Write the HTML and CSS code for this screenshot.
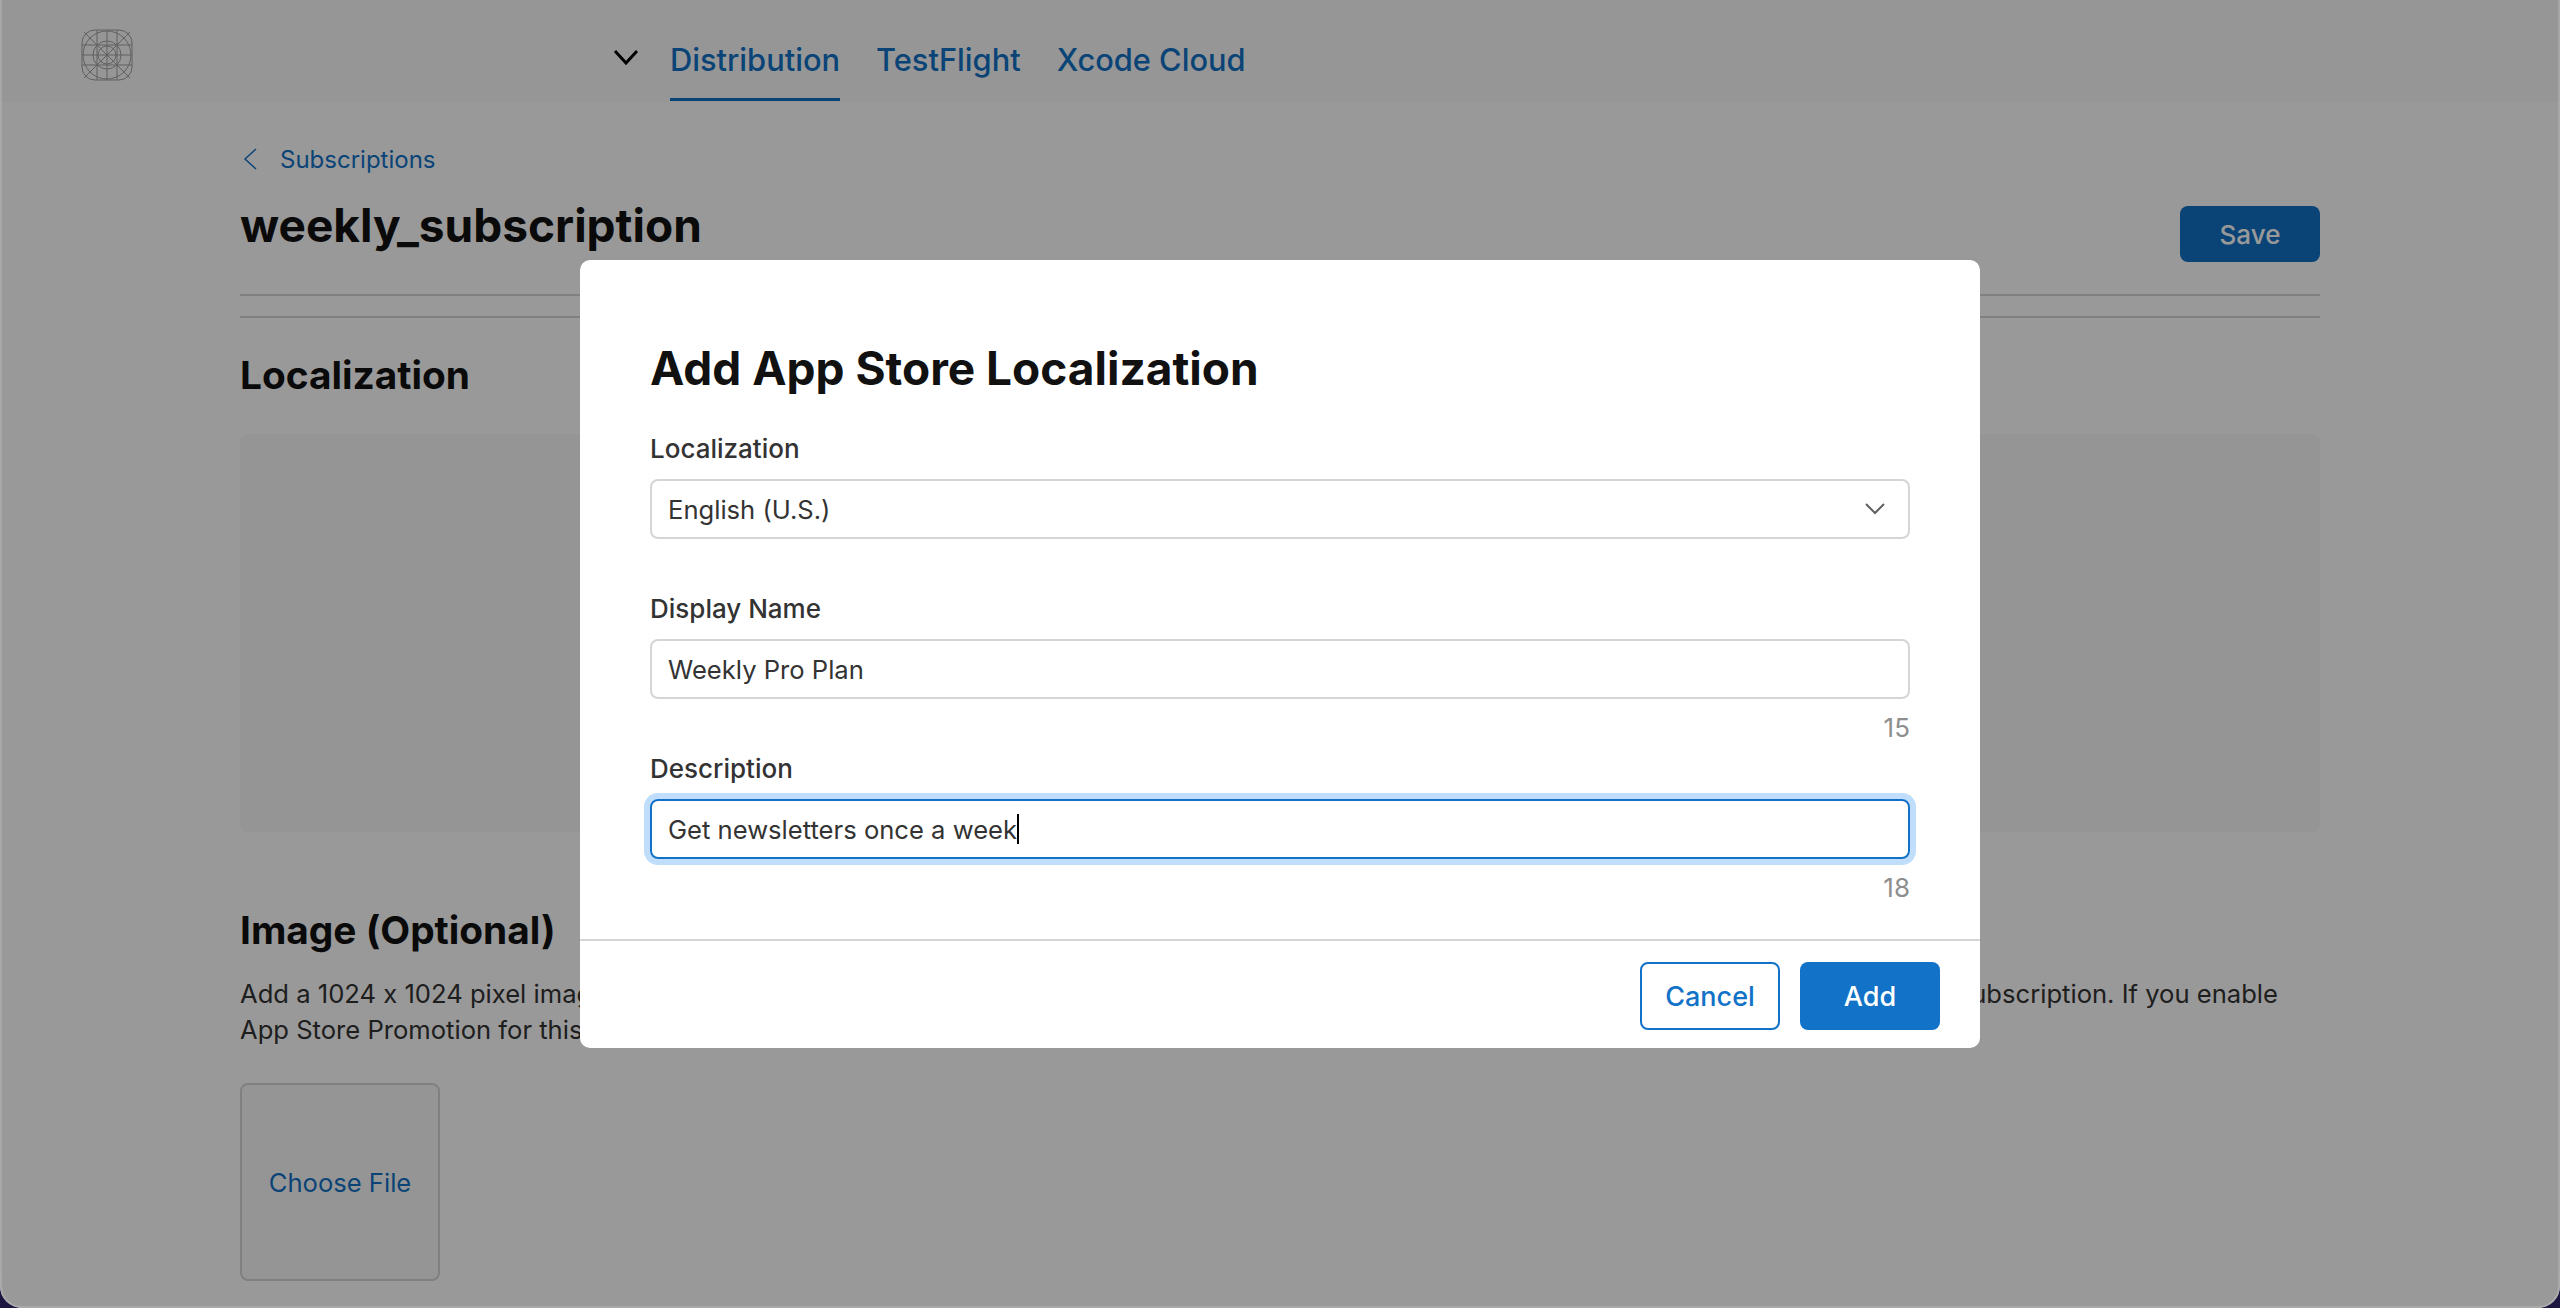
FILE: index.html
```html
<!DOCTYPE html>
<html lang="en">
<head>
    <meta charset="UTF-8">
    <meta name="viewport" content="width=device-width, initial-scale=1.0">
    <title>weekly_subscription</title>
    <link rel="stylesheet" href="styles.css">
</head>
<body>
    <div class="window">
        <header class="topbar">
            <svg class="logo" viewBox="0 0 52 52" fill="none" stroke="#a0a0a0" stroke-width="1">
                <rect x="1" y="1" width="50" height="50" rx="13"/>
                <circle cx="26" cy="26" r="24"/>
                <circle cx="26" cy="26" r="14"/>
                <circle cx="26" cy="26" r="9"/>
                <path d="M3 3L49 49M49 3L3 49M1 26H51M26 1V51M16 1V51M36 1V51M1 16H51M1 36H51"/>
            </svg>
            <svg class="nav-chevron" viewBox="0 0 26 16" fill="none" stroke="#000" stroke-width="3">
                <path d="M2 2L13 14L24 2"/>
            </svg>
            <nav class="tabs">
                <a class="tab active">Distribution</a>
                <a class="tab">TestFlight</a>
                <a class="tab">Xcode Cloud</a>
            </nav>
        </header>
        <main class="content">
            <a class="back">
                <svg viewBox="0 0 14 22" fill="none" stroke="#1272c7" stroke-width="1.5"><path d="M13 1L2 11L13 21"/></svg>
                Subscriptions
            </a>
            <div class="title-row">
                <h1>weekly_subscription</h1>
                <button class="save">Save</button>
            </div>
            <div class="rule"></div>
            <div class="rule"></div>
            <h2 class="loc-heading">Localization</h2>
            <div class="empty-box"></div>
            <h2 class="img-heading">Image (Optional)</h2>
            <div class="img-text">
                <div class="img-line">
                    <span>Add a 1024 x 1024 pixel image</span>
                    <span>subscription. If you enable</span>
                </div>
                <div class="img-line">
                    <span>App Store Promotion for this</span>
                </div>
            </div>
            <div class="file-box">Choose File</div>
        </main>
        <div class="overlay"></div>
        <div class="modal">
            <div class="modal-body">
                <h2 class="modal-title">Add App Store Localization</h2>
                <label class="field-label">Localization</label>
                <div class="field select">
                    <span>English (U.S.)</span>
                    <svg viewBox="0 0 20 12" fill="none" stroke="#5f5f5f" stroke-width="2"><path d="M1 1L10 10L19 1"/></svg>
                </div>
                <label class="field-label second">Display Name</label>
                <div class="field"><span>Weekly Pro Plan</span></div>
                <div class="count">15</div>
                <label class="field-label">Description</label>
                <div class="field focused"><span>Get newsletters once a week</span><i class="caret"></i></div>
                <div class="count">18</div>
            </div>
            <div class="modal-footer">
                <button class="btn cancel">Cancel</button>
                <button class="btn add">Add</button>
            </div>
        </div>
    </div>
</body>
</html>
```

FILE: styles.css
```css
* {
    box-sizing: border-box;
}
html, body {
    height: 100%;
}
body {
    margin: 0;
    overflow: hidden;
    background-color: #1d1640;
    font-family: Inter, "Liberation Sans", sans-serif;
    font-feature-settings: "calt" 0;
    color: #333;
}
.window {
    position: relative;
    height: 1308px;
    overflow: hidden;
    background-color: #fff;
    border-radius: 0 0 22px 22px;
}
.topbar {
    display: flex;
    align-items: center;
    height: 102px;
    padding-left: 81px;
    background-color: #fbfbfb;
}
.logo {
    width: 52px;
    height: 52px;
    margin-top: 8px;
}
.nav-chevron {
    width: 26px;
    height: 16px;
    margin-left: 480px;
    margin-top: 12px;
}
.tabs {
    display: flex;
    gap: 36px;
    margin-left: 31px;
    height: 101px;
    align-self: flex-start;
}
.tab {
    display: flex;
    align-items: center;
    height: 101px;
    padding-top: 20px;
    font-size: 30.8px;
    font-weight: 500;
    color: #1272c7;
    border-bottom: 3px solid transparent;
}
.tab.active {
    border-bottom-color: #1272c7;
}
.content {
    padding: 41px 240px 0;
}
.back {
    display: flex;
    align-items: center;
    gap: 23px;
    height: 32px;
    font-size: 24px;
    color: #1272c7;
}
.back svg {
    width: 14px;
    height: 22px;
    margin-left: 3px;
}
.title-row {
    display: flex;
    justify-content: space-between;
    align-items: flex-start;
    height: 119px;
    padding-top: 31px;
}
h1 {
    margin: -6px 0 0;
    font-size: 46px;
    line-height: 50px;
    font-weight: 700;
    color: #111;
}
.save {
    width: 140px;
    height: 56px;
    border: none;
    border-radius: 8px;
    background-color: #1272c7;
    color: #fff;
    font: 500 26px Inter, sans-serif;
}
.rule {
    height: 2px;
    margin-bottom: 20px;
    background-color: #d5d5d5;
}
h2 {
    margin: 0;
    font-size: 38.8px;
    line-height: 44px;
    font-weight: 700;
    color: #111;
}
.loc-heading {
    margin-top: 35px;
}
.empty-box {
    height: 398px;
    margin-top: 37px;
    border-radius: 8px;
    background-color: #f8f8f8;
}
.img-heading {
    margin-top: 76px;
}
.img-text {
    margin-top: 24px;
    font-size: 25.6px;
    line-height: 36px;
}
.img-line {
    display: flex;
    justify-content: space-between;
    padding-right: 42px;
}
.file-box {
    display: flex;
    align-items: center;
    justify-content: center;
    width: 200px;
    height: 198px;
    margin-top: 35px;
    border: 2px solid #d5d5d5;
    border-radius: 8px;
    background-color: #f8f8f8;
    font-size: 25.6px;
    color: #1272c7;
}
.overlay {
    position: absolute;
    inset: 0;
    background-color: rgba(0, 0, 0, 0.4);
    border: 2px solid rgba(255, 255, 255, 0.15);
    border-top: none;
    border-radius: 0 0 22px 22px;
}
.modal {
    position: absolute;
    left: 580px;
    top: 260px;
    width: 1400px;
    height: 788px;
    display: flex;
    flex-direction: column;
    background-color: #fff;
    border-radius: 10px;
}
.modal-body {
    height: 681px;
    padding: 0 70px;
    border-bottom: 2px solid #d5d5d5;
}
.modal-title {
    padding-top: 80px;
    font-size: 46px;
    line-height: 56px;
    margin-bottom: 37px;
}
.field-label {
    display: block;
    height: 32px;
    margin-bottom: 14px;
    font-size: 26px;
    line-height: 32px;
    font-weight: 500;
}
.field-label.second {
    margin-top: 54px;
}
.field {
    display: flex;
    align-items: center;
    height: 60px;
    padding: 0 16px;
    border: 2px solid #d5d5d5;
    border-radius: 8px;
    font-size: 25.6px;
}
.select {
    justify-content: space-between;
}
.select svg {
    width: 20px;
    height: 12px;
    margin-right: 7px;
}
.focused {
    border-color: #1272c7;
    box-shadow: 0 0 0 6px #c0ddfb;
}
.caret {
    width: 2px;
    height: 30px;
    background-color: #000;
}
.count {
    height: 54px;
    padding-top: 13px;
    text-align: right;
    font-size: 26px;
    line-height: 32px;
    color: #8e8e8e;
}
.modal-footer {
    display: flex;
    justify-content: flex-end;
    gap: 20px;
    padding: 21px 40px 0 0;
}
.btn {
    width: 140px;
    height: 68px;
    border-radius: 8px;
    font: 500 27px Inter, sans-serif;
}
.cancel {
    border: 2px solid #1272c7;
    background-color: #fff;
    color: #1272c7;
}
.add {
    border: none;
    background-color: #1272c7;
    color: #fff;
}
```
